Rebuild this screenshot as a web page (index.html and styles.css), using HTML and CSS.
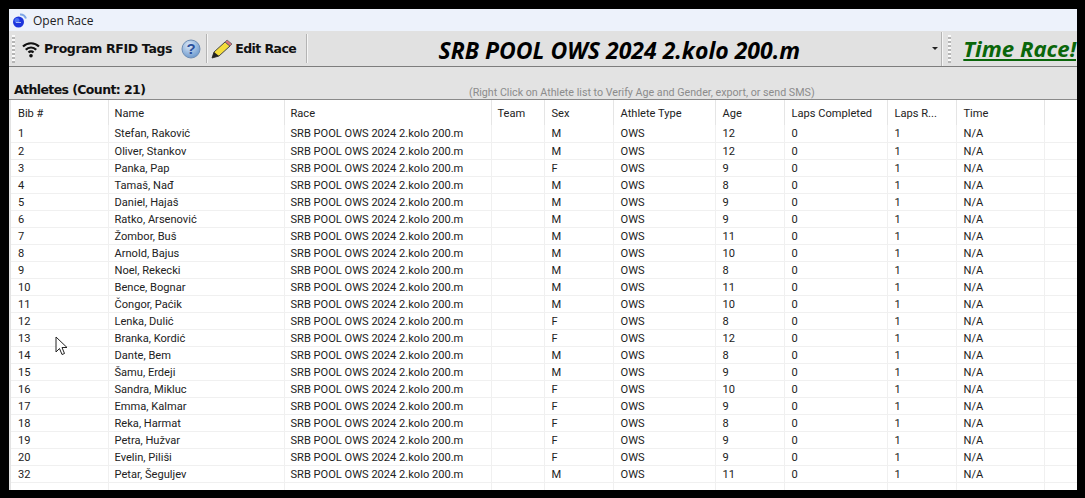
FILE: index.html
```html
<!DOCTYPE html>
<html lang="en">
<head>
    <meta charset="UTF-8">
    <title>Open Race</title>
    <link rel="stylesheet" href="styles.css">
</head>
<body>
    <div class="window">
        <div class="titlebar">
            <svg class="app-icon" width="17" height="17" viewBox="0 0 17 17">
                <path d="M8 2.500a6 6 0 0 1 6 4" fill="none" stroke="#7ea6e6" stroke-width="2"/>
                <circle cx="6.500" cy="10" r="5.500" fill="#1c34dc"/>
                <circle cx="5" cy="8.500" r="2.500" fill="#4a70f2"/>
                <path d="M4 10.500h5" stroke="#a9b9f5" stroke-width="1"/>
            </svg>
            <span>Open Race</span>
        </div>

        <div class="toolbar">
            <div class="grip"></div>
            <div class="tool wifi-tool">
                <svg width="18" height="18" viewBox="0 0 18 18" fill="none" stroke="#111" stroke-width="2.200">
                    <path d="M1 6.500a11.500 11.500 0 0 1 16 0"/>
                    <path d="M3.800 9.800a7 7 0 0 1 10.400 0"/>
                    <path d="M6.500 12.500a3.500 3.500 0 0 1 5 0"/>
                    <circle cx="9" cy="15.800" r="1.800" fill="#111" stroke="none"/>
                </svg>
                <span>Program RFID Tags</span>
            </div>
            <svg class="help" width="20" height="20" viewBox="0 0 20 20">
                <defs>
                    <radialGradient id="helpFill" cx="0.4" cy="0.3" r="0.8">
                        <stop offset="0" stop-color="#dbe8f7"/>
                        <stop offset="1" stop-color="#5f8fc8"/>
                    </radialGradient>
                </defs>
                <circle cx="10" cy="10" r="9" fill="url(#helpFill)" stroke="#6d8db5"/>
                <text x="10" y="15" text-anchor="middle" class="help-mark">?</text>
            </svg>
            <div class="sep"></div>
            <div class="tool edit-tool">
                <svg width="22" height="20" viewBox="0 0 22 20">
                    <path d="M1 19l2-6L14 3l5 4L8 17z" fill="#f4dc3c" stroke="#444" stroke-width="1"/>
                    <path d="M1 19l2-6 5 4z" fill="#222"/>
                    <path d="M14 3l2-2 5 4-2 2z" fill="#d9707a" stroke="#666" stroke-width="0.800"/>
                </svg>
                <span>Edit Race</span>
            </div>
            <div class="sep sep-wide"></div>
            <div class="race-title">SRB POOL OWS 2024 2.kolo 200.m</div>
            <div class="drop-arrow"></div>
            <div class="sep sep-end"></div>
            <div class="grip grip-end"></div>
            <div class="time-race">Time Race!</div>
        </div>

        <div class="band">
            <span class="count">Athletes (Count: 21)</span>
            <span class="hint">(Right Click on Athlete list to Verify Age and Gender, export, or send SMS)</span>
        </div>

        <table class="athletes">
            <colgroup>
                <col class="c-bib"><col class="c-name"><col class="c-race"><col class="c-team"><col class="c-sex">
                <col class="c-type"><col class="c-age"><col class="c-laps"><col class="c-lapsr"><col class="c-time"><col>
            </colgroup>
            <thead>
                <tr><th>Bib #</th><th>Name</th><th>Race</th><th>Team</th><th>Sex</th><th>Athlete Type</th><th>Age</th><th>Laps Completed</th><th>Laps R...</th><th>Time</th><th></th></tr>
            </thead>
            <tbody>
                <tr><td>1</td><td>Stefan, Raković</td><td>SRB POOL OWS 2024 2.kolo 200.m</td><td></td><td>M</td><td>OWS</td><td>12</td><td>0</td><td>1</td><td>N/A</td><td></td></tr>
                <tr><td>2</td><td>Oliver, Stankov</td><td>SRB POOL OWS 2024 2.kolo 200.m</td><td></td><td>M</td><td>OWS</td><td>12</td><td>0</td><td>1</td><td>N/A</td><td></td></tr>
                <tr><td>3</td><td>Panka, Pap</td><td>SRB POOL OWS 2024 2.kolo 200.m</td><td></td><td>F</td><td>OWS</td><td>9</td><td>0</td><td>1</td><td>N/A</td><td></td></tr>
                <tr><td>4</td><td>Tamaš, Nađ</td><td>SRB POOL OWS 2024 2.kolo 200.m</td><td></td><td>M</td><td>OWS</td><td>8</td><td>0</td><td>1</td><td>N/A</td><td></td></tr>
                <tr><td>5</td><td>Daniel, Hajaš</td><td>SRB POOL OWS 2024 2.kolo 200.m</td><td></td><td>M</td><td>OWS</td><td>9</td><td>0</td><td>1</td><td>N/A</td><td></td></tr>
                <tr><td>6</td><td>Ratko, Arsenović</td><td>SRB POOL OWS 2024 2.kolo 200.m</td><td></td><td>M</td><td>OWS</td><td>9</td><td>0</td><td>1</td><td>N/A</td><td></td></tr>
                <tr><td>7</td><td>Žombor, Buš</td><td>SRB POOL OWS 2024 2.kolo 200.m</td><td></td><td>M</td><td>OWS</td><td>11</td><td>0</td><td>1</td><td>N/A</td><td></td></tr>
                <tr><td>8</td><td>Arnold, Bajus</td><td>SRB POOL OWS 2024 2.kolo 200.m</td><td></td><td>M</td><td>OWS</td><td>10</td><td>0</td><td>1</td><td>N/A</td><td></td></tr>
                <tr><td>9</td><td>Noel, Rekecki</td><td>SRB POOL OWS 2024 2.kolo 200.m</td><td></td><td>M</td><td>OWS</td><td>8</td><td>0</td><td>1</td><td>N/A</td><td></td></tr>
                <tr><td>10</td><td>Bence, Bognar</td><td>SRB POOL OWS 2024 2.kolo 200.m</td><td></td><td>M</td><td>OWS</td><td>11</td><td>0</td><td>1</td><td>N/A</td><td></td></tr>
                <tr><td>11</td><td>Čongor, Paćik</td><td>SRB POOL OWS 2024 2.kolo 200.m</td><td></td><td>M</td><td>OWS</td><td>10</td><td>0</td><td>1</td><td>N/A</td><td></td></tr>
                <tr><td>12</td><td>Lenka, Dulić</td><td>SRB POOL OWS 2024 2.kolo 200.m</td><td></td><td>F</td><td>OWS</td><td>8</td><td>0</td><td>1</td><td>N/A</td><td></td></tr>
                <tr><td>13</td><td>Branka, Kordić</td><td>SRB POOL OWS 2024 2.kolo 200.m</td><td></td><td>F</td><td>OWS</td><td>12</td><td>0</td><td>1</td><td>N/A</td><td></td></tr>
                <tr><td>14</td><td>Dante, Bem</td><td>SRB POOL OWS 2024 2.kolo 200.m</td><td></td><td>M</td><td>OWS</td><td>8</td><td>0</td><td>1</td><td>N/A</td><td></td></tr>
                <tr><td>15</td><td>Šamu, Erdeji</td><td>SRB POOL OWS 2024 2.kolo 200.m</td><td></td><td>M</td><td>OWS</td><td>9</td><td>0</td><td>1</td><td>N/A</td><td></td></tr>
                <tr><td>16</td><td>Sandra, Mikluc</td><td>SRB POOL OWS 2024 2.kolo 200.m</td><td></td><td>F</td><td>OWS</td><td>10</td><td>0</td><td>1</td><td>N/A</td><td></td></tr>
                <tr><td>17</td><td>Emma, Kalmar</td><td>SRB POOL OWS 2024 2.kolo 200.m</td><td></td><td>F</td><td>OWS</td><td>9</td><td>0</td><td>1</td><td>N/A</td><td></td></tr>
                <tr><td>18</td><td>Reka, Harmat</td><td>SRB POOL OWS 2024 2.kolo 200.m</td><td></td><td>F</td><td>OWS</td><td>8</td><td>0</td><td>1</td><td>N/A</td><td></td></tr>
                <tr><td>19</td><td>Petra, Hužvar</td><td>SRB POOL OWS 2024 2.kolo 200.m</td><td></td><td>F</td><td>OWS</td><td>9</td><td>0</td><td>1</td><td>N/A</td><td></td></tr>
                <tr><td>20</td><td>Evelin, Piliši</td><td>SRB POOL OWS 2024 2.kolo 200.m</td><td></td><td>F</td><td>OWS</td><td>9</td><td>0</td><td>1</td><td>N/A</td><td></td></tr>
                <tr><td>32</td><td>Petar, Šeguljev</td><td>SRB POOL OWS 2024 2.kolo 200.m</td><td></td><td>M</td><td>OWS</td><td>11</td><td>0</td><td>1</td><td>N/A</td><td></td></tr>
                <tr class="blank"><td></td><td></td><td></td><td></td><td></td><td></td><td></td><td></td><td></td><td></td><td></td></tr>
            </tbody>
        </table>

        <!-- mouse pointer caught in the screenshot -->
        <svg class="pointer" width="14" height="21" viewBox="0 0 14 21">
            <path d="M1 1v15l3.500-3.500 2.500 6 2.500-1-2.500-6h5z" fill="#fff" stroke="#222" stroke-width="1"/>
        </svg>
    </div>
</body>
</html>
```

FILE: styles.css
```css
html, body {
    margin: 0;
    height: 498px;
    overflow: hidden;
    background-color: #000;
}

.window {
    position: relative;
    display: flex;
    flex-direction: column;
    width: 1068px;
    height: 481px;
    margin: 9px 0 0 9px;
    overflow: hidden;
    background-color: #e3e3e3;
    font-family: Roboto, "Liberation Sans", sans-serif;
}

.titlebar {
    display: flex;
    align-items: center;
    flex: 0 0 22px;
    padding-left: 3px;
    background-color: #edf2fb;
    font-family: "Open Sans", sans-serif;
    font-size: 12px;
    color: #222;
}
.app-icon {
    margin-right: 4px;
}

.toolbar {
    display: flex;
    align-items: center;
    flex: 0 0 36px;
    box-sizing: border-box;
    border-bottom: 1px solid #7d7d7d;
    padding-left: 3px;
    background-color: #e1e1e1;
}
.grip {
    width: 3px;
    height: 28px;
    background-image: repeating-linear-gradient(to bottom, #fafafa 0, #fafafa 2px, #b5b5b5 2px, #b5b5b5 4px);
}
.tool {
    display: flex;
    align-items: center;
    font-family: "DejaVu Sans", sans-serif;
    font-size: 12.500px;
    font-weight: bold;
    color: #111;
}
.wifi-tool {
    margin-left: 7px;
    gap: 4px;
}
.wifi-tool span {
    letter-spacing: -0.350px;
}
.help {
    margin-left: 9px;
}
.help-mark {
    font-family: "Liberation Sans", sans-serif;
    font-size: 15px;
    font-weight: bold;
    fill: #2a4f9c;
}
.sep {
    width: 1px;
    height: 29px;
    margin-left: 5px;
    background-color: #b4b4b4;
    border-right: 1px solid #f6f6f6;
}
.edit-tool {
    margin-left: 3px;
    gap: 2px;
}
.edit-tool span {
    letter-spacing: -0.550px;
}
.sep-wide {
    margin-left: 10px;
}
.race-title {
    flex: 1;
    padding: 2px 0 0 2px;
    text-align: center;
    font-family: "Open Sans", sans-serif;
    font-size: 23px;
    font-weight: bold;
    font-style: italic;
    color: #000;
    white-space: nowrap;
}
.drop-arrow {
    width: 0;
    height: 0;
    margin-left: 4px;
    border-top: 3px solid #222;
    border-left: 3px solid transparent;
    border-right: 3px solid transparent;
}
.sep-end {
    height: 34px;
    margin-left: 3px;
}
.grip-end {
    margin-left: 5px;
}
.time-race {
    margin-left: 12px;
    padding-right: 1px;
    font-family: "Open Sans", sans-serif;
    font-size: 22.200px;
    font-weight: bold;
    font-style: italic;
    color: #0a660a;
    text-decoration: underline;
    white-space: nowrap;
}

.band {
    display: flex;
    align-items: flex-end;
    flex: 0 0 33px;
    box-sizing: border-box;
    border-bottom: 1px solid #8a8a8a;
    padding-left: 5px;
    background-color: #e3e3e3;
}
.count {
    width: 455px;
    margin-bottom: 2px;
    font-family: "DejaVu Sans", sans-serif;
    font-size: 12.500px;
    font-weight: bold;
    letter-spacing: -0.600px;
    color: #111;
}
.hint {
    font-size: 10.700px;
    line-height: 13px;
    color: #8c8c8c;
    white-space: nowrap;
}

.athletes {
    width: 1066px;
    margin-left: 2px;
    border-collapse: collapse;
    table-layout: fixed;
    background-color: #fff;
    font-size: 11.100px;
    color: #222;
}
.c-bib { width: 97px; }
.c-name { width: 176px; }
.c-race { width: 207px; }
.c-team { width: 53px; }
.c-sex { width: 69px; }
.c-type { width: 102px; }
.c-age { width: 69px; }
.c-laps { width: 103px; }
.c-lapsr { width: 69px; }
.c-time { width: 88px; }

.athletes th, .athletes td {
    box-sizing: border-box;
    height: 17px;
    padding: 1px 0 0 7px;
    border-right: 1px solid #f0f0f0;
    text-align: left;
    font-weight: normal;
    white-space: nowrap;
    overflow: hidden;
}
.athletes th:nth-child(2), .athletes td:nth-child(2),
.athletes th:nth-child(3), .athletes td:nth-child(3),
.athletes th:nth-child(4), .athletes td:nth-child(4) {
    padding-left: 6px;
}
.athletes th {
    height: 25px;
    border-right-color: #e5e5e5;
}
.athletes td {
    border-bottom: 1px solid #f0f0f0;
}
.athletes th:last-child, .athletes td:last-child {
    border-right: none;
}
.athletes .blank td {
    height: 9px;
    padding: 0;
    border-bottom: none;
}

.pointer {
    position: absolute;
    left: 46px;
    top: 327px;
}
```
